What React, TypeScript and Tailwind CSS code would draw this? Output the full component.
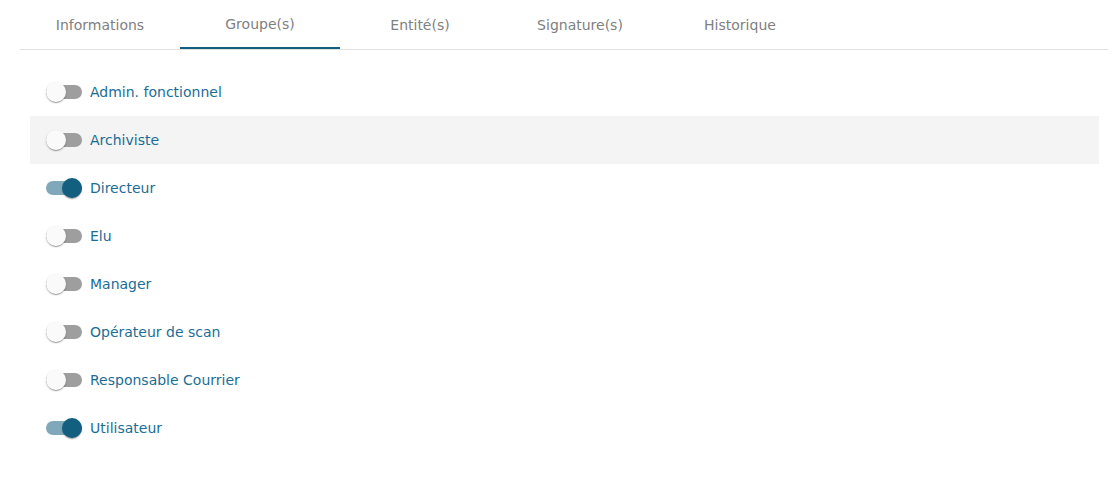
import React from "react";

const tabs = ["Informations", "Groupe(s)", "Entité(s)", "Signature(s)", "Historique"];
const groups: { label: string; on: boolean; hover?: boolean }[] = [
  { label: "Admin. fonctionnel", on: false },
  { label: "Archiviste", on: false, hover: true },
  { label: "Directeur", on: true },
  { label: "Elu", on: false },
  { label: "Manager", on: false },
  { label: "Opérateur de scan", on: false },
  { label: "Responsable Courrier", on: false },
  { label: "Utilisateur", on: true },
];

function Toggle({ on }: { on: boolean }) {
  return (
    <div className="relative w-[36px] h-[20px] flex items-center">
      <div className={`w-[36px] h-[14px] rounded-full ${on ? "bg-[#7fa8bb]" : "bg-[#9e9e9e]"}`} />
      <div
        className={`absolute top-0 w-[20px] h-[20px] rounded-full shadow-[0_2px_1px_-1px_rgba(0,0,0,0.2),0_1px_1px_0_rgba(0,0,0,0.14),0_1px_3px_0_rgba(0,0,0,0.12)] ${
          on ? "left-[16px] bg-[#135f80]" : "left-0 bg-[#fafafa]"
        }`}
      />
    </div>
  );
}

export default function App() {
  return (
    <div className="w-[1120px] h-[478px] bg-white font-['DejaVu_Sans',sans-serif]">
      <div className="ml-[20px] mr-[12px] flex border-b border-[#e0e0e0]">
        {tabs.map((t, i) => (
          <div
            key={t}
            className={`w-[160px] h-[49px] pt-[2px] flex items-center justify-center text-[14px] text-[#808080] ${
              i === 1 ? "border-b-2 border-[#135f80]" : ""
            }`}
          >
            {t}
          </div>
        ))}
      </div>
      <div className="ml-[30px] mr-[21px] mt-[18px]">
        {groups.map((g) => (
          <div
            key={g.label}
            className={`h-[48px] flex items-center pl-[16px] ${g.hover ? "bg-[#f4f4f4]" : ""}`}
          >
            <Toggle on={g.on} />
            <span className="ml-[8px] text-[14px] text-[#1b6d96]">{g.label}</span>
          </div>
        ))}
      </div>
    </div>
  );
}
